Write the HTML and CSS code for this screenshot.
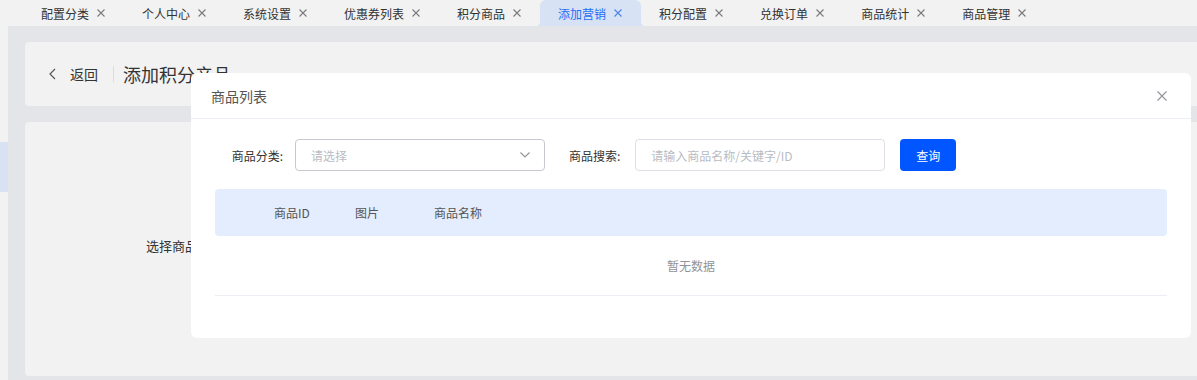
FILE: index.html
```html
<!DOCTYPE html>
<html lang="zh-CN">
<head>
  <meta charset="UTF-8" />
  <title>添加积分产品</title>
  <link rel="stylesheet" href="styles.css">
</head>
<body>

  <!-- Tab bar -->
  <div class="tabs">
    <div class="tab">配置分类<svg class="tab-close" viewBox="0 0 8 8"><path d="M0.5 0.5l7 7M7.5 0.5l-7 7"/></svg></div>
    <div class="tab">个人中心<svg class="tab-close" viewBox="0 0 8 8"><path d="M0.5 0.5l7 7M7.5 0.5l-7 7"/></svg></div>
    <div class="tab">系统设置<svg class="tab-close" viewBox="0 0 8 8"><path d="M0.5 0.5l7 7M7.5 0.5l-7 7"/></svg></div>
    <div class="tab">优惠券列表<svg class="tab-close" viewBox="0 0 8 8"><path d="M0.5 0.5l7 7M7.5 0.5l-7 7"/></svg></div>
    <div class="tab">积分商品<svg class="tab-close" viewBox="0 0 8 8"><path d="M0.5 0.5l7 7M7.5 0.5l-7 7"/></svg></div>
    <div class="tab active">添加营销<svg class="tab-close" viewBox="0 0 8 8"><path d="M0.5 0.5l7 7M7.5 0.5l-7 7"/></svg></div>
    <div class="tab">积分配置<svg class="tab-close" viewBox="0 0 8 8"><path d="M0.5 0.5l7 7M7.5 0.5l-7 7"/></svg></div>
    <div class="tab">兑换订单<svg class="tab-close" viewBox="0 0 8 8"><path d="M0.5 0.5l7 7M7.5 0.5l-7 7"/></svg></div>
    <div class="tab">商品统计<svg class="tab-close" viewBox="0 0 8 8"><path d="M0.5 0.5l7 7M7.5 0.5l-7 7"/></svg></div>
    <div class="tab">商品管理<svg class="tab-close" viewBox="0 0 8 8"><path d="M0.5 0.5l7 7M7.5 0.5l-7 7"/></svg></div>
  </div>

  <div class="main">
    <aside class="sidebar">
      <div class="sidebar-active"></div>
    </aside>

    <div class="content">
      <div class="page-header">
        <span class="back">
          <svg width="7" height="12" viewBox="0 0 7 12"><path d="M6 1L1 6l5 5" fill="none" stroke="#555" stroke-width="1.2"/></svg>
          返回
        </span>
        <span class="divider"></span>
        <span class="page-title">添加积分产品</span>
      </div>

      <div class="page-card">
        <div class="form-line">
          <span class="form-label">选择商品</span>
        </div>
      </div>
    </div>
  </div>

  <!-- Goods list dialog -->
  <div class="dialog">
    <div class="dialog-header">
      <span class="dialog-title">商品列表</span>
      <svg class="dialog-close" width="10" height="10" viewBox="0 0 10 10"><path d="M0.5 0.5l9 9M9.5 0.5l-9 9" stroke="#909399" stroke-width="1.1"/></svg>
    </div>
    <div class="dialog-body">
      <div class="filter-row">
        <label class="filter-label">商品分类:</label>
        <div class="select">
          <span class="placeholder">请选择</span>
          <svg width="10" height="6" viewBox="0 0 10 6"><path d="M0.5 0.5L5 5l4.5-4.5" fill="none" stroke="#909399" stroke-width="1.1"/></svg>
        </div>
        <label class="filter-label search-label">商品搜索:</label>
        <div class="input">
          <span class="placeholder">请输入商品名称/关键字/ID</span>
        </div>
        <button type="button" class="btn-primary">查询</button>
      </div>

      <div class="table">
        <div class="table-head">
          <span class="col col-sel"></span>
          <span class="col col-id">商品ID</span>
          <span class="col col-pic">图片</span>
          <span class="col col-name">商品名称</span>
        </div>
        <div class="table-empty">暂无数据</div>
      </div>
    </div>
  </div>

</body>
</html>
```

FILE: styles.css
```css
/* Base */
body {
  margin: 0;
  font-family: "Noto Sans CJK SC", "Noto Sans", sans-serif;
  font-size: 12px;
  color: #333;
  background: #e4e5e9;
  height: 380px;
  overflow: hidden;
}

/* Tabs */
.tabs {
  display: flex;
  height: 26px;
  padding-left: 23px;
  background: #f2f2f2;
}

.tab {
  position: relative;
  display: flex;
  align-items: center;
  padding: 0 19px 0 18px;
  height: 26px;
  color: #333;
  white-space: nowrap;
}

.tab-close {
  width: 8px;
  height: 8px;
  margin-left: 8px;
  fill: none;
  stroke: #7a7a7a;
  stroke-width: 1.1;
}

.tab.active {
  color: #1e6ef5;
  background: #d7e2f5;
  border-radius: 6px 6px 0 0;
}

.tab.active .tab-close {
  stroke: #4b84e8;
}

.tab.active::before,
.tab.active::after {
  content: '';
  position: absolute;
  bottom: 0;
  width: 5px;
  height: 5px;
}

.tab.active::before {
  left: -5px;
  background: radial-gradient(circle at 0 0, transparent 5px, #d7e2f5 5.5px);
}

.tab.active::after {
  right: -5px;
  background: radial-gradient(circle at 100% 0, transparent 5px, #d7e2f5 5.5px);
}

/* Page layout */
.main {
  display: flex;
  height: 354px;
}

.sidebar {
  width: 8px;
  background: #f2f2f2;
  padding-top: 116px;
  box-sizing: border-box;
}

.sidebar-active {
  height: 50px;
  background: #d8e2f3;
}

.content {
  flex: 1;
  padding: 16px 0 0 17px;
}

.page-header {
  display: flex;
  align-items: center;
  height: 64px;
  padding-left: 23px;
  background: #f2f2f2;
  border-radius: 4px 0 0 4px;
}

.back {
  display: flex;
  align-items: center;
  gap: 14px;
  font-size: 14px;
  color: #333;
  padding-left: 1px;
}

.divider {
  width: 1px;
  height: 16px;
  margin: 0 9px 0 15px;
  background: #ddd;
}

.page-title {
  font-size: 18px;
  color: #333;
}

.page-card {
  height: 254px;
  margin-top: 16px;
  background: #f2f2f2;
  border-radius: 4px 0 0 4px;
}

.form-line {
  padding: 114px 0 0 121px;
}

.form-label {
  font-size: 13px;
  color: #333;
}

/* Dialog */
.dialog {
  position: absolute;
  left: 191px;
  top: 73px;
  width: 1000px;
  background: #fff;
  border-radius: 6px;
}

.dialog-header {
  display: flex;
  align-items: center;
  justify-content: space-between;
  height: 45px;
  padding: 0 24px 0 20px;
  border-bottom: 1px solid #ebeef5;
}

.dialog-title {
  font-size: 14px;
  color: #555;
}

.dialog-body {
  padding: 20px 24px 42px 24px;
}

.filter-row {
  display: flex;
  align-items: center;
  height: 32px;
}

.filter-label {
  width: 68px;
  padding-right: 12px;
  text-align: right;
  color: #333;
}

.search-label {
  width: auto;
  margin-left: 24px;
  padding-right: 15px;
}

.select,
.input {
  display: flex;
  align-items: center;
  justify-content: space-between;
  width: 250px;
  height: 32px;
  padding: 0 14px 0 15px;
  box-sizing: border-box;
  border: 1px solid #dcdfe6;
  border-radius: 4px;
}

.select {
  border-color: #c6c9d1;
}

.placeholder {
  color: #b8bcc4;
}

.btn-primary {
  margin-left: 15px;
  width: 56px;
  height: 32px;
  border: none;
  border-radius: 4px;
  background: #0256ff;
  color: #fff;
  font-family: inherit;
  font-size: 12px;
}

/* Table */
.table {
  margin-top: 18px;
}

.table-head {
  display: flex;
  align-items: center;
  height: 47px;
  background: #e3edfd;
  border-radius: 4px;
  color: #555;
}

.col-sel {
  width: 59px;
}

.col-id {
  width: 81px;
}

.col-pic {
  width: 79px;
}

.table-empty {
  height: 59px;
  line-height: 59px;
  text-align: center;
  color: #909399;
  border-bottom: 1px solid #ebeef5;
}
```
